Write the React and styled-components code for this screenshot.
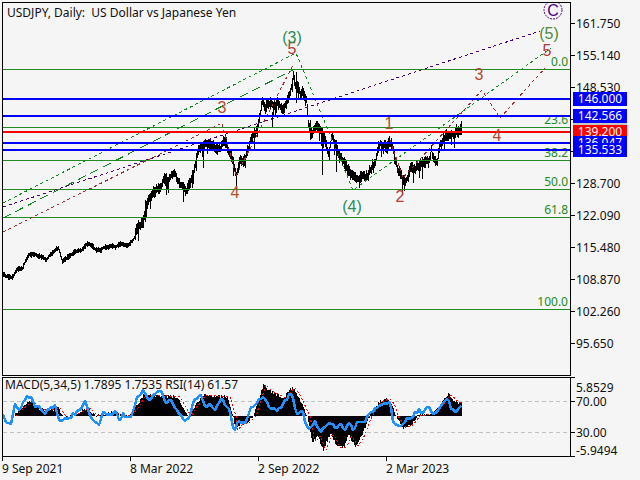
import React from 'react';
import styled, { createGlobalStyle } from 'styled-components';

const GlobalStyle = createGlobalStyle`
  html, body { margin: 0; padding: 0; background: #f5f5f5; }
`;

const FONT = `"Noto Sans", "DejaVu Sans", sans-serif`;

const Page = styled.div`
  width: 640px;
  height: 480px;
  box-sizing: border-box;
  padding: 2px 0 0 2px;
  background: #f5f5f5;
  color: #111;
  font: 12px/13px ${FONT};
  overflow: hidden;
`;
const PaneRow = styled.div`
  display: flex;
  height: ${p => p.$height}px;
  margin-bottom: ${p => p.$gap || 0}px;
`;
const Plot = styled.div`
  position: relative;
  width: 569px;
  box-sizing: border-box;
  border: 1px solid #000;
  flex: none;
  overflow: hidden;
`;
const PlotSvg = styled.svg`
  display: block;
  position: relative;
  z-index: 1;
`;
const PaneTitle = styled.div`
  position: absolute;
  left: ${p => p.$left}px;
  top: ${p => p.$top}px;
  font-size: ${p => p.$size}px;
  line-height: 16px;
  white-space: pre;
`;
const Scale = styled.div`
  position: relative;
  flex: 1;
  display: flex;
  flex-direction: column;
  padding-top: 5px;
`;
const Tick = styled.div`
  height: 32px;
  flex: none;
  display: flex;
  align-items: center;
  gap: 1px;
  &::before {
    content: '';
    width: 4px;
    height: 1px;
    background: #000;
  }
`;
const SubScale = styled.div`
  flex: 1;
  display: grid;
  grid-template-rows: 17px 31px 19px 13px;
`;
const SubTick = styled.div`
  display: flex;
  align-items: flex-start;
  height: ${p => p.$height}px;
  gap: 1px;
  &::before {
    content: '';
    width: 4px;
    height: 1px;
    flex: none;
    background: #000;
    align-self: ${p => p.$mark};
  }
`;
const SubValue = styled.span`
  align-self: ${p => p.$align};
`;
const Badge = styled.div`
  position: absolute;
  left: 2px;
  top: ${p => p.$top}px;
  width: 54px;
  height: 14px;
  background: ${p => p.$bg};
  color: #fff;
  font-size: 12px;
  line-height: 14px;
  text-align: center;
`;
const TimeAxis = styled.div`
  display: grid;
  grid-template-columns: repeat(4, 128px);
  width: 569px;
`;
const TimeTick = styled.div`
  padding-top: 5px;
  white-space: nowrap;
  background: linear-gradient(#000, #000) left top / 1px 4px no-repeat;
`;

// ----- data, traced from the picture -----
const pricePath = [
  [3,275],[8,277],[12,276],[17,268],[22,267],[24,262],[28,254],[33,253],[38,255],[43,256],[46,259],[50,253],[55,250],[58,248],[62,260],[65,258],[70,255],[76,253],[80,251],[87,244],[90,246],[95,250],[100,251],[103,247],[110,246],[115,248],[120,245],[127,247],[132,242],[134,238],
  [138,230],[142,226],[145,215],[148,205],[153,195],[158,187],[163,182],[168,177],[172,172],[176,175],[180,180],[186,191],[190,188],[195,168],[198,155],[202,150],[205,148],[210,150],[215,150],[220,145],[225,135],[228,146],[232,158],[236,172],[240,160],[245,158],[250,145],[255,135],[258,128],[262,108],[265,112],[270,110],[275,108],[280,105],[285,100],[290,85],[293,70],[296,85],[300,90],[303,92],[306,98],[308,122],[312,130],[316,125],[320,135],[325,148],[328,158],
  [332,140],[336,150],[340,162],[345,172],[352,182],[358,186],[365,180],[368,178],[373,165],[380,150],[385,145],[390,143],[393,150],[398,165],[402,172],[405,175],[410,165],[415,163],[420,158],[425,155],[428,160],[431,145],[433,155],[437,155],[440,140],[445,130],[450,128],[460,128],[461,124],
];
const wicks = [[272,112,128],[203,150,168],[233,165,176],[296,72,103],[310,120,140],[322,130,175],[336,140,172],[391,138,150],[145,200,222],[461,121,130]];

const histPts = [
  [3,416],[13,416],[20,409],[26,404],[30,401],[36,407],[43,410],[50,410],[58,408],[62,416],[67,418],[75,414],[87,408],[95,416],[105,414],[113,412],[120,415],[128,416],[135,408],[143,395],[150,395],[165,396],[177,397],[188,416],[195,405],[203,395],[215,396],[227,397],[233,416],[235,430],[240,424],[247,422],[253,416],[258,400],[263,385],[268,390],[273,393],[283,398],[292,387],[298,397],[307,416],[312,443],[317,436],[323,450],[330,433],[337,447],[344,447],[348,435],[355,446],[362,435],[368,418],[373,410],[380,401],[387,399],[392,405],[395,416],[403,428],[410,425],[417,416],[423,415],[433,413],[440,405],[448,394],[453,400],[462,405],
];
const fromZoom3 = [[10,530],[25,548],[35,550],[45,490],[55,515],[80,470],[95,470],[105,498],[125,505],[135,520],[145,510],[165,495],[175,540],[185,550],[200,535],[220,525],[240,510],[258,475],[265,520],[280,540],[295,558],[310,515],[330,525],[345,515],[358,540],[370,520],[385,535],[395,525],[410,475],[430,445],[445,485],[460,465],[480,445],[495,480],[520,490],[535,515],[555,545],[565,540],[580,490],[600,460],[610,490],[620,505],[630,485],[645,510],[665,480],[680,500],[690,520],[703,572],[715,545],[735,550],[750,505],[770,490],[790,465],[810,500],[830,510],[850,490],[875,455],[885,510],[895,525],[905,505],[925,575],[945,545]];
const fromZoom4 = [[0,575],[20,560],[35,545],[50,570],[60,547],[75,570],[85,545],[100,570],[115,545],[135,545],[145,520],[165,505],[185,490],[210,490],[220,545],[245,560],[265,535],[280,525],[295,510],[310,520],[325,488],[332,515],[345,525],[365,490],[385,480],[395,510],[410,518],[425,502]];
const rsiKeys = [
  ...fromZoom3.map(([x, y]) => [x / 3, 240 + y / 3]),
  ...fromZoom4.map(([x, y]) => [320 + x / 3, 240 + y / 3]),
];

const toLine = pts => pts.map(p => p.join(',')).join(' ');
const interp = (pts, x) => {
  for (let i = 1; i < pts.length; i++) {
    if (x <= pts[i][0]) {
      const [x0, y0] = pts[i - 1];
      const [x1, y1] = pts[i];
      return y0 + ((y1 - y0) * (x - x0)) / (x1 - x0 || 1);
    }
  }
  return pts[pts.length - 1][1];
};
const makeRandom = seed => () => {
  seed = (seed * 16807) % 2147483647;
  return seed / 2147483647;
};
const buildPriceBars = () => {
  const rnd = makeRandom(4711);
  let d = '';
  let walk = 0;
  for (let x = 3; x <= 461; x++) {
    const late = x >= 135;
    const limit = x < 135 ? 1.5 : x < 260 ? 5 : 7;
    walk = Math.max(-limit, Math.min(limit, walk + (rnd() - 0.5) * limit));
    const c = interp(pricePath, x) + walk;
    const half = (late ? 3 : 1.5) + rnd() * (late ? 3 : 1.5);
    const spike = late && rnd() < 0.15 ? 4 + rnd() * 8 : 0;
    d += `M${x} ${Math.round(c - half)}V${Math.round(c + half + spike)}`;
  }
  wicks.forEach(([x, a, b]) => { d += `M${x} ${a}V${b}`; });
  return d;
};
const buildHist = () => {
  const rnd = makeRandom(97);
  let d = '';
  for (let x = 13; x <= 461; x++) {
    const y = Math.round(interp(histPts, x) + (rnd() - 0.5) * 3);
    d += `M${x} 416V${y}`;
  }
  return d;
};
const buildRsi = () => {
  const rnd = makeRandom(311);
  const out = [];
  for (let x = 3; x <= 462; x += 2) out.push([x, Math.round(interp(rsiKeys, x) + (rnd() - 0.5) * 4)]);
  return out;
};
const signalPts = (() => {
  const out = [];
  for (let x = 16; x <= 462; x += 2) out.push([x, interp(histPts, x - 3)]);
  return out;
})();

const fibs = [
  { y: 69, label: '0.0' },
  { y: 127, label: '23.6' },
  { y: 160, label: '38.2' },
  { y: 189, label: '50.0' },
  { y: 217, label: '61.8' },
  { y: 309, label: '100.0' },
];
const levels = [
  { y: 99, c: '#0000ff' },
  { y: 116, c: '#0000ff' },
  { y: 132, c: '#ff0000' },
  { y: 143, c: '#0000ff' },
  { y: 150, c: '#0000ff' },
];
const WAVE_RED = '#a52a2a';
const WAVE_GREEN = '#0a8a1a';
const INDIGO = '#4b0082';
const waves = [
  { pts: [[3,232],[222,123],[236,176],[293,65]], c: WAVE_RED, dash: '3 3' },
  { pts: [[390,140],[403,178],[482,90],[500,118],[545,68]], c: WAVE_RED, dash: '3 3' },
  { pts: [[3,203],[296,53],[353,190],[551,48]], c: WAVE_GREEN, dash: '3 3' },
  { pts: [[3,218],[293,70]], c: WAVE_GREEN, dash: '9 5' },
  { pts: [[3,207],[540,31]], c: INDIGO, dash: '3 3' },
];
const waveLabels = [
  { x: 222, y: 113, t: '3', c: '#b5482e' },
  { x: 235, y: 198, t: '4', c: '#a8542a' },
  { x: 292, y: 54, t: '5', c: '#b23a3a' },
  { x: 292, y: 43, t: '(3)', c: '#2e8b57' },
  { x: 352, y: 212, t: '(4)', c: '#2e8b57' },
  { x: 389, y: 129, t: '1', c: '#a8542a' },
  { x: 400, y: 202, t: '2', c: '#b23a3a' },
  { x: 479, y: 80, t: '3', c: '#b5482e' },
  { x: 497, y: 141, t: '4', c: '#b5482e' },
  { x: 547, y: 56, t: '5', c: '#b23a3a' },
  { x: 549, y: 39, t: '(5)', c: '#4f8a3a' },
];

const FibLabel = styled.text`
  font: 12px ${FONT};
  fill: #228b22;
  text-anchor: end;
`;
const WaveLabel = styled.text`
  font: 16px "Liberation Sans", sans-serif;
  text-anchor: middle;
`;

const scalePrices = ['161.750','155.140','148.530','','','128.700','122.090','115.480','108.870','102.260','95.650'];

const PriceChart = () => (
  <PlotSvg width="567" height="372" viewBox="3 3 567 372">
    <path d={buildPriceBars()} stroke="#000" strokeWidth="1" shapeRendering="crispEdges" />
    {fibs.map(f => (
      <g key={f.y}>
        <line x1="3" x2="570" y1={f.y + 0.5} y2={f.y + 0.5} stroke="#228b22" shapeRendering="crispEdges" />
        <FibLabel x="568" y={f.y - 3}>{f.label}</FibLabel>
      </g>
    ))}
    {waves.map((w, i) => (
      <polyline key={i} points={toLine(w.pts)} fill="none" stroke={w.c} strokeWidth="1" strokeDasharray={w.dash} shapeRendering="crispEdges" />
    ))}
    {levels.map(l => (
      <line key={l.y} x1="3" x2="570" y1={l.y} y2={l.y} stroke={l.c} strokeWidth="2" shapeRendering="crispEdges" />
    ))}
    {waveLabels.map((l, i) => (
      <WaveLabel key={i} x={l.x} y={l.y} fill={l.c}>{l.t}</WaveLabel>
    ))}
    <circle cx="553" cy="10" r="9" fill="none" stroke={INDIGO} strokeDasharray="2 1" />
    <WaveLabel x="553" y="16" fill={INDIGO}>C</WaveLabel>
  </PlotSvg>
);

const IndicatorChart = () => (
  <PlotSvg width="567" height="78" viewBox="3 378 567 78">
    <line x1="3" x2="570" y1="401.5" y2="401.5" stroke="#c0c0c0" strokeDasharray="4 3" shapeRendering="crispEdges" />
    <line x1="3" x2="570" y1="432.5" y2="432.5" stroke="#c0c0c0" strokeDasharray="4 3" shapeRendering="crispEdges" />
    <path d={buildHist()} stroke="#000" strokeWidth="1" shapeRendering="crispEdges" />
    <polyline points={toLine(signalPts)} fill="none" stroke="#ff0000" strokeWidth="1" strokeDasharray="2 2" shapeRendering="crispEdges" />
    <polyline points={toLine(buildRsi())} fill="none" stroke="#1e90ff" strokeWidth="2.5" strokeLinejoin="round" shapeRendering="crispEdges" />
  </PlotSvg>
);

export default function App() {
  return (
    <Page>
      <GlobalStyle />
      <PaneRow $height={374} $gap={1}>
        <Plot>
          <PaneTitle $left={4} $top={2} $size={12}>{'USDJPY, Daily:  US Dollar vs Japanese Yen'}</PaneTitle>
          <PriceChart />
        </Plot>
        <Scale>
          {scalePrices.map((p, i) => <Tick key={i}>{p}</Tick>)}
          <Badge $bg="#c8c8c8" $top={118} />
          <Badge $bg="#0000ff" $top={90}>146.000</Badge>
          <Badge $bg="#0000ff" $top={107}>142.566</Badge>
          <Badge $bg="#ff0000" $top={123}>139.200</Badge>
          <Badge $bg="#0000ff" $top={134}>136.047</Badge>
          <Badge $bg="#0000ff" $top={141}>135.533</Badge>
        </Scale>
      </PaneRow>
      <PaneRow $height={80}>
        <Plot>
          <PaneTitle $left={2} $top={-1} $size={12}>MACD(5,34,5) 1.7895 1.7535 RSI(14) 61.57</PaneTitle>
          <IndicatorChart />
        </Plot>
        <SubScale>
          <SubTick $height={17} $mark="flex-start"><SubValue $align="flex-end">5.8529</SubValue></SubTick>
          <SubTick $height={14} $mark="center"><SubValue $align="center">70.00</SubValue></SubTick>
          <SubTick $height={14} $mark="center"><SubValue $align="center">30.00</SubValue></SubTick>
          <SubTick $height={13} $mark="flex-end"><SubValue $align="flex-start">-5.9494</SubValue></SubTick>
        </SubScale>
      </PaneRow>
      <TimeAxis>
        <TimeTick>9 Sep 2021</TimeTick>
        <TimeTick>8 Mar 2022</TimeTick>
        <TimeTick>2 Sep 2022</TimeTick>
        <TimeTick>2 Mar 2023</TimeTick>
      </TimeAxis>
    </Page>
  );
}
